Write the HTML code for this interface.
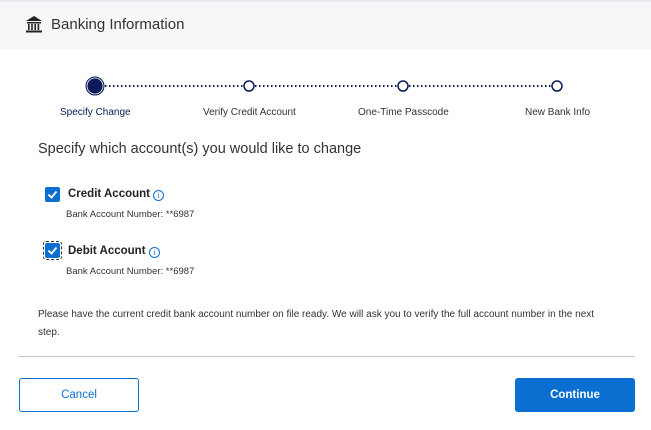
<!DOCTYPE html>
<html><head><style>
body{margin:0;width:651px;height:430px;background:#fff;font-family:"Liberation Sans",Arial,sans-serif;color:#333;position:relative;overflow:hidden}
.hdr{position:absolute;left:0;top:0;width:651px;height:49px;background:#f6f7f9;border-top:2px solid #e8eaed;box-sizing:border-box}
.abs{position:absolute;white-space:nowrap}
.lbl{font-size:10px;color:#333;top:107px}
.cb{position:absolute;width:15px;height:15px;background:#0b6fd1;border-radius:2px}
.cb svg{position:absolute;left:2px;top:3px}
.b{font-size:11.5px;font-weight:bold;color:#222}
.s{font-size:9.5px;color:#333}
.i{position:absolute;width:9px;height:9px;border:1px solid #0b6fd1;border-radius:50%;color:#0b6fd1;font-size:8px;text-align:center;line-height:9px;font-family:"Liberation Serif",serif}
</style></head><body>
<div class="hdr"></div>
<svg class="abs" style="left:25px;top:15px" width="18" height="18" viewBox="0 0 18 18"><path d="M1 6 L9 1 L17 6 Z" fill="#222"/><rect x="2" y="7" width="14" height="1.5" fill="#222"/><rect x="3" y="9" width="1.6" height="6" fill="#222"/><rect x="6.2" y="9" width="1.6" height="6" fill="#222"/><rect x="9.4" y="9" width="1.6" height="6" fill="#222"/><rect x="12.6" y="9" width="1.6" height="6" fill="#222"/><rect x="1" y="15.5" width="16" height="2" fill="#222"/></svg>
<div class="abs" style="left:51px;top:16px;font-size:15px;color:#333">Banking Information</div>
<svg class="abs" style="left:0;top:70px" width="651" height="32">
<line x1="105" y1="16" x2="244" y2="16" stroke="#111a4a" stroke-width="2" stroke-dasharray="1.5 2.5"/>
<line x1="255" y1="16" x2="398" y2="16" stroke="#111a4a" stroke-width="2" stroke-dasharray="1.5 2.5"/>
<line x1="409" y1="16" x2="552" y2="16" stroke="#111a4a" stroke-width="2" stroke-dasharray="1.5 2.5"/>
<circle cx="95" cy="16" r="9" fill="#0a1a5a" stroke="#0a1a5a" stroke-width="1"/><circle cx="95" cy="16" r="8" fill="none" stroke="#fff" stroke-width="0.8"/>
<circle cx="249" cy="16" r="5" fill="#fff" stroke="#0a1a5a" stroke-width="1.5"/>
<circle cx="403" cy="16" r="5" fill="#fff" stroke="#0a1a5a" stroke-width="1.5"/>
<circle cx="557" cy="16" r="5" fill="#fff" stroke="#0a1a5a" stroke-width="1.5"/>
</svg>
<div class="abs lbl" style="left:60px;color:#0a1a5a">Specify Change</div>
<div class="abs lbl" style="left:203px">Verify Credit Account</div>
<div class="abs lbl" style="left:358px">One-Time Passcode</div>
<div class="abs lbl" style="left:525px">New Bank Info</div>
<div class="abs" style="left:38px;top:141px;font-size:14.5px;color:#333">Specify which account(s) you would like to change</div>
<div class="cb" style="left:45px;top:187px"><svg width="11" height="9"><path d="M1.5 4.5 L4.5 7.5 L9.5 1.5" stroke="#fff" stroke-width="1.8" fill="none"/></svg></div>
<div class="abs b" style="left:68px;top:188px">Credit Account</div>
<div class="i" style="left:153px;top:190px">i</div>
<div class="abs s" style="left:66px;top:209px">Bank Account Number: **6987</div>
<div style="position:absolute;left:43px;top:241px;width:19px;height:19px;border:1px dashed #333;border-radius:3px;box-sizing:border-box"></div>
<div class="cb" style="left:45px;top:243px"><svg width="11" height="9"><path d="M1.5 4.5 L4.5 7.5 L9.5 1.5" stroke="#fff" stroke-width="1.8" fill="none"/></svg></div>
<div class="abs b" style="left:68px;top:245px">Debit Account</div>
<div class="i" style="left:149px;top:247px">i</div>
<div class="abs s" style="left:66px;top:266px">Bank Account Number: **6987</div>
<div class="abs" style="left:38px;top:306px;font-size:10px;color:#333;line-height:18px;white-space:normal;width:570px">Please have the current credit bank account number on file ready. We will ask you to verify the full account number in the next step.</div>
<div class="abs" style="left:18px;top:356px;width:617px;height:1px;background:#c8c8c8"></div>
<div class="abs" style="left:19px;top:378px;width:120px;height:34px;box-sizing:border-box;border:1px solid #0b6fd1;border-radius:3px;color:#0b6fd1;font-size:11.5px;text-align:center;line-height:32px">Cancel</div>
<div class="abs" style="left:515px;top:378px;width:120px;height:34px;background:#0b6fd1;border-radius:3px;color:#fff;font-size:11.5px;font-weight:bold;text-align:center;line-height:34px">Continue</div>
</body></html>
